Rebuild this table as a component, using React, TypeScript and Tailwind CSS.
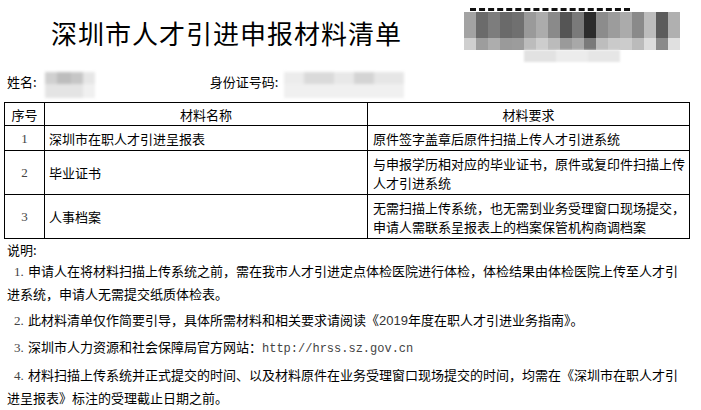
const row1 = ["#a3a3a3","#6b6b6b","#7d7d7d","#6a6a6a","#707070","#9a9a9a","#acacac","#8a8a8a","#555555","#7a7a7a","#2c2c2c","#8c8c8c","#9c9c9c","#ababab","#8a8a8a","#bdbdbd","#5c5c5c","#b0b0b0"];
const row2 = ["#cfcfcf","#9d9d9d","#adadad","#9a9a9a","#9c9c9c","#bcbcbc","#cdcdcd","#bbbbbb","#9a9a9a","#a8a8a8","#7a7a7a","#bdbdbd","#cacaca","#cccccc","#bbbbbb","#dcdcdc","#8a8a8a","#e0e0e0"];

function Mosaic() {
  return (
    <div className="flex flex-col w-[216px] mt-[8px]">
      <div className="h-[4px] w-[160px] ml-[6px] border-t-[3px] border-dashed border-[#111]" />
      <div className="flex h-[26px] blur-[0.5px]">
        {row1.map((c, i) => (
          <div key={i} className="w-[12px] h-full" style={{ backgroundColor: c }} />
        ))}
      </div>
      <div className="flex h-[12px] blur-[0.5px]">
        {row2.map((c, i) => (
          <div key={i} className="w-[12px] h-full" style={{ backgroundColor: c }} />
        ))}
      </div>
      <div className="flex h-[12px] ml-[60px] blur-[1px]">
        <div className="w-[32px] bg-[#e2e2e2]" />
        <div className="w-[32px] bg-[#ececec]" />
        <div className="w-[32px] bg-[#e6e6e6]" />
      </div>
    </div>
  );
}

function Cell({ w, children, center }: { w: string; children: React.ReactNode; center?: boolean }) {
  return (
    <div className={`${w} border-r border-b border-black flex items-center ${center ? "justify-center" : "pl-[4px]"}`}>
      {children}
    </div>
  );
}

function Num({ n }: { n: string }) {
  return <span className="font-['Liberation_Serif',serif] text-[13px] text-[#444]">{n}</span>;
}

export default function App() {
  return (
    <div className="w-[701px] h-[410px] bg-white overflow-hidden text-black font-['Noto_Sans_CJK_SC',sans-serif]">
      {/* Title */}
      <div className="flex h-[66px]">
        <div className="pl-[51px] pt-[19px] text-[26px] leading-[28px] tracking-[1px] whitespace-nowrap">
          深圳市人才引进申报材料清单
        </div>
        <div className="ml-[62px]">
          <Mosaic />
        </div>
      </div>

      {/* Name row */}
      <div className="flex h-[36px] items-start text-[13px] leading-[20px]">
        <div className="pl-[7px] pt-[6px] whitespace-nowrap">姓名:</div>
        <div className="ml-[8px] mt-[6px] w-[50px] h-[26px] blur-[1.5px] flex flex-col">
          <div className="flex h-[12px]">
            <div className="w-[12px] bg-[#d0d0d0]" />
            <div className="w-[14px] bg-[#bdbdbd]" />
            <div className="w-[12px] bg-[#c6c6c6]" />
            <div className="w-[12px] bg-[#e6e6e6]" />
          </div>
          <div className="flex h-[14px]">
            <div className="w-[38px] bg-[#e4e4e4]" />
            <div className="w-[12px] bg-[#f0f0f0]" />
          </div>
        </div>
        <div className="ml-[115px] pt-[6px] whitespace-nowrap">身份证号码:</div>
        <div className="ml-[6px] mt-[6px] w-[120px] h-[26px] blur-[1.5px] flex flex-col">
          <div className="flex h-[12px]">
            <div className="w-[20px] bg-[#ececec]" />
            <div className="w-[30px] bg-[#dadada]" />
            <div className="w-[20px] bg-[#e8e8e8]" />
            <div className="w-[20px] bg-[#d4d4d4]" />
            <div className="w-[30px] bg-[#e6e6e6]" />
          </div>
          <div className="h-[14px] bg-[#f0f0f0]" />
        </div>
      </div>

      {/* Table */}
      <div className="ml-[4px] w-[686px] border-l border-t border-black text-[13px]">
        <div className="flex h-[23px] leading-[19px]">
          <Cell w="w-[40px]" center>序号</Cell>
          <Cell w="w-[323px]" center>材料名称</Cell>
          <Cell w="w-[322px]" center>材料要求</Cell>
        </div>
        <div className="flex h-[25px] leading-[19px]">
          <Cell w="w-[40px]" center><Num n="1" /></Cell>
          <Cell w="w-[323px]">深圳市在职人才引进呈报表</Cell>
          <Cell w="w-[322px]"><span className="pl-[1px]">原件签字盖章后原件扫描上传人才引进系统</span></Cell>
        </div>
        <div className="flex h-[44px] leading-[19px]">
          <Cell w="w-[40px]" center><Num n="2" /></Cell>
          <Cell w="w-[323px]">毕业证书</Cell>
          <Cell w="w-[322px]">
            <div className="pl-[1px] whitespace-nowrap">
              与申报学历相对应的毕业证书，原件或复印件扫描上传
              <br />
              人才引进系统
            </div>
          </Cell>
        </div>
        <div className="flex h-[44px] leading-[19px]">
          <Cell w="w-[40px]" center><Num n="3" /></Cell>
          <Cell w="w-[323px]">人事档案</Cell>
          <Cell w="w-[322px]">
            <div className="pl-[1px] whitespace-nowrap">
              无需扫描上传系统，也无需到业务受理窗口现场提交，
              <br />
              申请人需联系呈报表上的档案保管机构商调档案
            </div>
          </Cell>
        </div>
      </div>

      {/* Notes */}
      <div className="pl-[7px] text-[13px] whitespace-nowrap">
        <div className="h-[21px] leading-[21px]">说明:</div>
        <div className="leading-[22px]">
          <span className="inline-block w-[21px] pl-[7px]"><Num n="1." /></span>申请人在将材料扫描上传系统之前，需在我市人才引进定点体检医院进行体检，体检结果由体检医院上传至人才引
          <br />
          进系统，申请人无需提交纸质体检表。
        </div>
        <div className="mt-[4px] leading-[22px]">
          <span className="inline-block w-[21px] pl-[7px]"><Num n="2." /></span>此材料清单仅作简要引导，具体所需材料和相关要求请阅读《<span className="font-['Liberation_Sans',sans-serif] text-[#333]">2019</span>年度在职人才引进业务指南》。
        </div>
        <div className="mt-[4px] leading-[22px]">
          <span className="inline-block w-[21px] pl-[7px]"><Num n="3." /></span>深圳市人力资源和社会保障局官方网站：<span className="font-['Liberation_Mono',monospace] text-[12px] text-[#444]">http://hrss.sz.gov.cn</span>
        </div>
        <div className="mt-[4px] leading-[22px]">
          <span className="inline-block w-[21px] pl-[7px]"><Num n="4." /></span>材料扫描上传系统并正式提交的时间、以及材料原件在业务受理窗口现场提交的时间，均需在《深圳市在职人才引
          <br />
          进呈报表》标注的受理截止日期之前。
        </div>
      </div>
    </div>
  );
}
